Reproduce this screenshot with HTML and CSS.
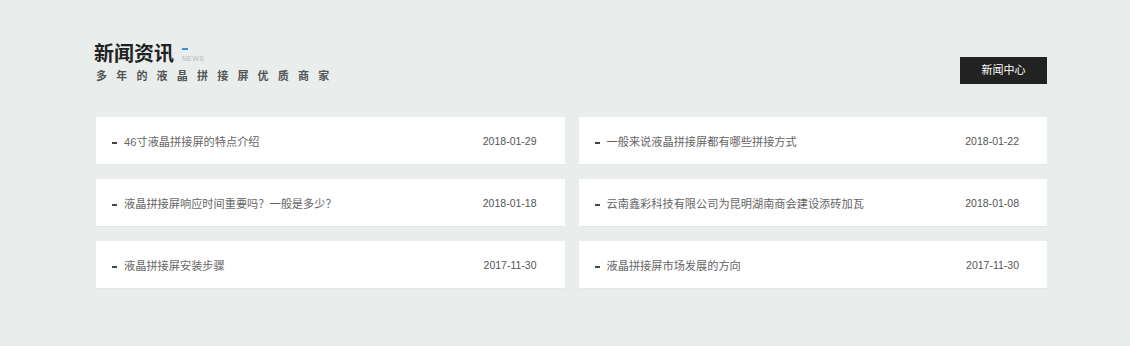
FILE: index.html
```html
<!DOCTYPE html>
<html lang="zh-CN">
<head>
  <meta charset="UTF-8" />
  <title>新闻资讯</title>
  <link rel="stylesheet" href="styles.css">
</head>
<body>

<section class="news">
  <div class="news-head">
    <div class="news-title">
      <h2>新闻资讯<span class="en"><i></i>NEWS</span></h2>
      <p>多年的液晶拼接屏优质商家</p>
    </div>
    <a class="more" href="#">新闻中心</a>
  </div>

  <ul class="news-list">
    <li><a href="#"><span class="t">46寸液晶拼接屏的特点介绍</span><span class="d">2018-01-29</span></a></li>
    <li><a href="#"><span class="t">一般来说液晶拼接屏都有哪些拼接方式</span><span class="d">2018-01-22</span></a></li>
    <li><a href="#"><span class="t">液晶拼接屏响应时间重要吗？一般是多少？</span><span class="d">2018-01-18</span></a></li>
    <li><a href="#"><span class="t">云南鑫彩科技有限公司为昆明湖南商会建设添砖加瓦</span><span class="d">2018-01-08</span></a></li>
    <li><a href="#"><span class="t">液晶拼接屏安装步骤</span><span class="d">2017-11-30</span></a></li>
    <li><a href="#"><span class="t">液晶拼接屏市场发展的方向</span><span class="d">2017-11-30</span></a></li>
  </ul>
</section>

</body>
</html>
```

FILE: styles.css
```css
* {
  box-sizing: border-box;
  margin: 0;
  padding: 0;
}

body {
  font-family: "Liberation Sans", "Noto Sans CJK SC", sans-serif;
  background: #e9eeec;
  color: #555;
}

a {
  text-decoration: none;
  color: inherit;
}

.news {
  width: 951px;
  margin-left: 96px;
  padding-top: 42px;
}

.news-head {
  display: flex;
  justify-content: space-between;
  align-items: flex-start;
  margin-left: -2px;
}

.news-title h2 {
  display: flex;
  align-items: flex-end;
  font-size: 20px;
  line-height: 24px;
  font-weight: bold;
  color: #222;
}

.news-title .en {
  position: relative;
  margin-left: 8px;
  margin-bottom: 3px;
  font-size: 7px;
  line-height: 8px;
  font-weight: normal;
  color: #b5b9b8;
  letter-spacing: 0.3px;
}

.news-title .en i {
  position: absolute;
  left: 0;
  top: -7px;
  width: 6px;
  height: 2px;
  background: #3b8fd1;
}

.news-title p {
  margin-top: 3px;
  margin-left: 2px;
  font-size: 11px;
  line-height: 14px;
  font-weight: bold;
  letter-spacing: 9.2px;
  color: #555;
}

.more {
  margin-top: 15px;
  width: 87px;
  height: 27px;
  line-height: 27px;
  text-align: center;
  background: #222;
  color: #fff;
  font-size: 11px;
}

.news-list {
  list-style: none;
  display: grid;
  grid-template-columns: 1fr 1fr;
  column-gap: 14px;
  row-gap: 14px;
  margin-top: 33px;
}

.news-list a {
  display: flex;
  justify-content: space-between;
  align-items: center;
  height: 48px;
  padding: 0 28px 0 16px;
  background: #fff;
  border-bottom: 1px solid #e2e6e5;
}

.news-list .t {
  font-size: 11.2px;
  color: #666;
}

.news-list .t::before {
  content: "";
  display: inline-block;
  width: 5px;
  height: 2px;
  margin-right: 7px;
  vertical-align: middle;
  background: #444;
}

.news-list .d {
  font-size: 10.5px;
  color: #555;
}
```
